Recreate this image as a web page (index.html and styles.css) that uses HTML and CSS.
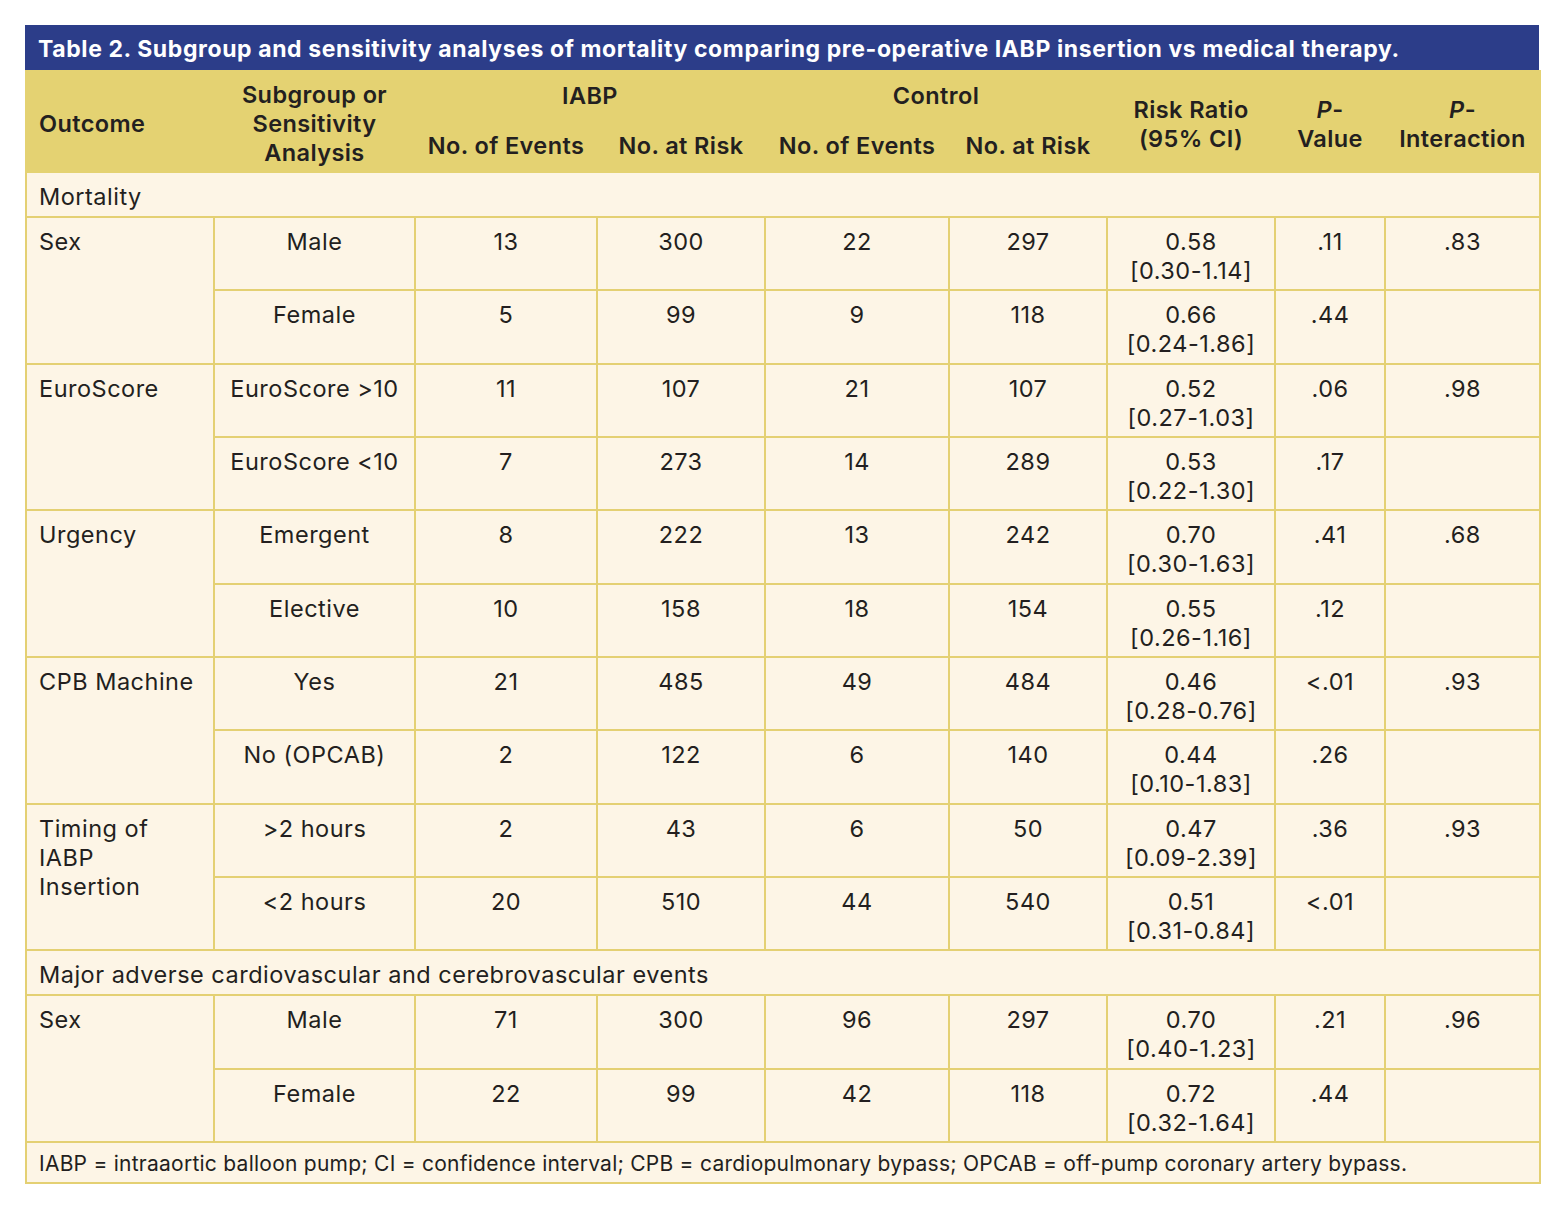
FILE: index.html
```html
<!DOCTYPE html>
<html>
<head>
<meta charset="utf-8">
<link rel="stylesheet" href="styles.css">
</head>
<body>
<div class="wrap">
  <div class="title">Table 2. Subgroup and sensitivity analyses of mortality comparing pre-operative IABP insertion vs medical therapy.</div>
  <table class="tbl">
    <colgroup>
      <col style="width:188px"><col style="width:201px"><col style="width:182px"><col style="width:168px"><col style="width:184px"><col style="width:158px"><col style="width:168px"><col style="width:110px"><col style="width:155px">
    </colgroup>
    <thead>
      <tr class="h1">
        <th rowspan="2" class="left mid">Outcome</th>
        <th rowspan="2" class="mid">Subgroup or<br>Sensitivity<br>Analysis</th>
        <th colspan="2" class="top">IABP</th>
        <th colspan="2" class="top">Control</th>
        <th rowspan="2" class="mid">Risk Ratio<br>(95% CI)</th>
        <th rowspan="2" class="mid"><i>P</i>-<br>Value</th>
        <th rowspan="2" class="mid"><i>P</i>-<br>Interaction</th>
      </tr>
      <tr class="h2">
        <th>No. of Events</th>
        <th>No. at Risk</th>
        <th>No. of Events</th>
        <th>No. at Risk</th>
      </tr>
    </thead>
    <tbody>
      <tr class="section"><td colspan="9">Mortality</td></tr>
      <tr class="row"><td rowspan="2" class="left">Sex</td><td>Male</td><td>13</td><td>300</td><td>22</td><td>297</td><td>0.58<br>[0.30-1.14]</td><td>.11</td><td>.83</td></tr>
      <tr class="row"><td>Female</td><td>5</td><td>99</td><td>9</td><td>118</td><td>0.66<br>[0.24-1.86]</td><td>.44</td><td></td></tr>
      <tr class="row"><td rowspan="2" class="left">EuroScore</td><td>EuroScore &gt;10</td><td>11</td><td>107</td><td>21</td><td>107</td><td>0.52<br>[0.27-1.03]</td><td>.06</td><td>.98</td></tr>
      <tr class="row"><td>EuroScore &lt;10</td><td>7</td><td>273</td><td>14</td><td>289</td><td>0.53<br>[0.22-1.30]</td><td>.17</td><td></td></tr>
      <tr class="row"><td rowspan="2" class="left">Urgency</td><td>Emergent</td><td>8</td><td>222</td><td>13</td><td>242</td><td>0.70<br>[0.30-1.63]</td><td>.41</td><td>.68</td></tr>
      <tr class="row"><td>Elective</td><td>10</td><td>158</td><td>18</td><td>154</td><td>0.55<br>[0.26-1.16]</td><td>.12</td><td></td></tr>
      <tr class="row"><td rowspan="2" class="left">CPB Machine</td><td>Yes</td><td>21</td><td>485</td><td>49</td><td>484</td><td>0.46<br>[0.28-0.76]</td><td>&lt;.01</td><td>.93</td></tr>
      <tr class="row"><td>No (OPCAB)</td><td>2</td><td>122</td><td>6</td><td>140</td><td>0.44<br>[0.10-1.83]</td><td>.26</td><td></td></tr>
      <tr class="row"><td rowspan="2" class="left">Timing of<br>IABP<br>Insertion</td><td>&gt;2 hours</td><td>2</td><td>43</td><td>6</td><td>50</td><td>0.47<br>[0.09-2.39]</td><td>.36</td><td>.93</td></tr>
      <tr class="row"><td>&lt;2 hours</td><td>20</td><td>510</td><td>44</td><td>540</td><td>0.51<br>[0.31-0.84]</td><td>&lt;.01</td><td></td></tr>
      <tr class="section"><td colspan="9">Major adverse cardiovascular and cerebrovascular events</td></tr>
      <tr class="row"><td rowspan="2" class="left">Sex</td><td>Male</td><td>71</td><td>300</td><td>96</td><td>297</td><td>0.70<br>[0.40-1.23]</td><td>.21</td><td>.96</td></tr>
      <tr class="row"><td>Female</td><td>22</td><td>99</td><td>42</td><td>118</td><td>0.72<br>[0.32-1.64]</td><td>.44</td><td></td></tr>
      <tr class="foot"><td colspan="9">IABP = intraaortic balloon pump; CI = confidence interval; CPB = cardiopulmonary bypass; OPCAB = off-pump coronary artery bypass.</td></tr>
    </tbody>
  </table>
</div>
</body>
</html>
```
FILE: styles.css
```css
html, body {
  margin: 0;
  padding: 0;
  background: #ffffff;
}
body {
  padding: 25px 0 0 25px;
  font-family: "Inter", "Open Sans", sans-serif;
  color: #231f20;
}
.wrap {
  width: 1514px;
}
.title {
  background: #2c3d89;
  color: #ffffff;
  font-weight: 700;
  font-size: 23px;
  letter-spacing: 0.6px;
  height: 45px;
  line-height: 48px;
  padding-left: 13px;
  box-sizing: border-box;
  white-space: nowrap;
}
.tbl {
  width: 1514px;
  table-layout: fixed;
  border-collapse: collapse;
  font-size: 23.5px;
  letter-spacing: 0.5px;
  line-height: 29px;
}
.tbl th, .tbl td {
  border: 2px solid #e4d073;
  padding: 0 2px;
  text-align: center;
  vertical-align: top;
  white-space: nowrap;
}
.tbl thead th {
  background: #e4d272;
  font-weight: 600;
  letter-spacing: 0.4px;
  border-color: #e4d272;
}
.tbl th.left, .tbl td.left {
  text-align: left;
  padding-left: 12px;
}
.tbl th.mid {
  vertical-align: middle;
}
.h1 th {
  padding-top: 9px;
}
.h2 th {
  vertical-align: bottom;
  padding-bottom: 11px;
}
.tbl thead tr.h1 th[rowspan] {
  padding-top: 8px;
  padding-bottom: 4px;
}
.tbl tbody td {
  background: #fdf5e6;
}
.section td {
  text-align: left;
  padding: 9px 12px 5px;
  height: 29px;
}
.row td {
  height: 58px;
  padding-top: 9px;
  padding-bottom: 4.33px;
}
.foot td {
  text-align: left;
  font-size: 21px;
  letter-spacing: 0.25px;
  line-height: 26px;
  padding: 8px 12px 5px;
}
```
